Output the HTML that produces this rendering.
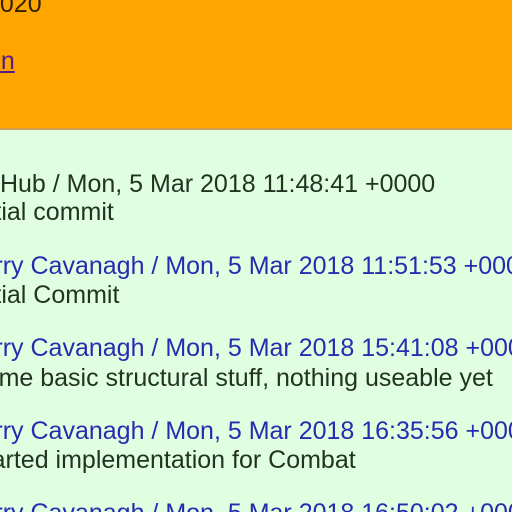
<!DOCTYPE html>
<html><head><style>
html,body{margin:0;padding:0;width:512px;height:512px;overflow:hidden;background:#e0ffe0;font-family:"Liberation Sans",sans-serif;}
#w{position:absolute;left:0;top:0;width:512px;height:512px;overflow:hidden;}
.hdr{position:absolute;left:0;top:0;width:512px;height:128px;background:#ffa500;border-bottom:2px solid #d0a050;}
.t{position:absolute;left:-32px;font-size:25px;line-height:28px;white-space:nowrap;}
.b{color:#2a2ab0}.d{color:#223322}
</style></head><body><div id="w">
<div class="hdr">
<div class="t" style="top:-10px;left:-14px;color:#332200">2020</div>
<div class="t" style="top:47px;left:-13px;color:#551a8b;text-decoration:underline">on</div>
</div>
<div class="t d" style="top:170px">GitHub / Mon, 5 Mar 2018 11:48:41 +0000</div>
<div class="t d" style="top:198px">Initial commit</div>
<div class="t b" style="top:252px">Terry Cavanagh / Mon, 5 Mar 2018 11:51:53 +0000</div>
<div class="t d" style="top:281px">Initial Commit</div>
<div class="t b" style="top:334px">Terry Cavanagh / Mon, 5 Mar 2018 15:41:08 +0000</div>
<div class="t d" style="top:364px">Some basic structural stuff, nothing useable yet</div>
<div class="t b" style="top:417px">Terry Cavanagh / Mon, 5 Mar 2018 16:35:56 +0000</div>
<div class="t d" style="top:446px">Started implementation for Combat</div>
<div class="t b" style="top:499px">Terry Cavanagh / Mon, 5 Mar 2018 16:50:02 +0000</div>
</div></body></html>
